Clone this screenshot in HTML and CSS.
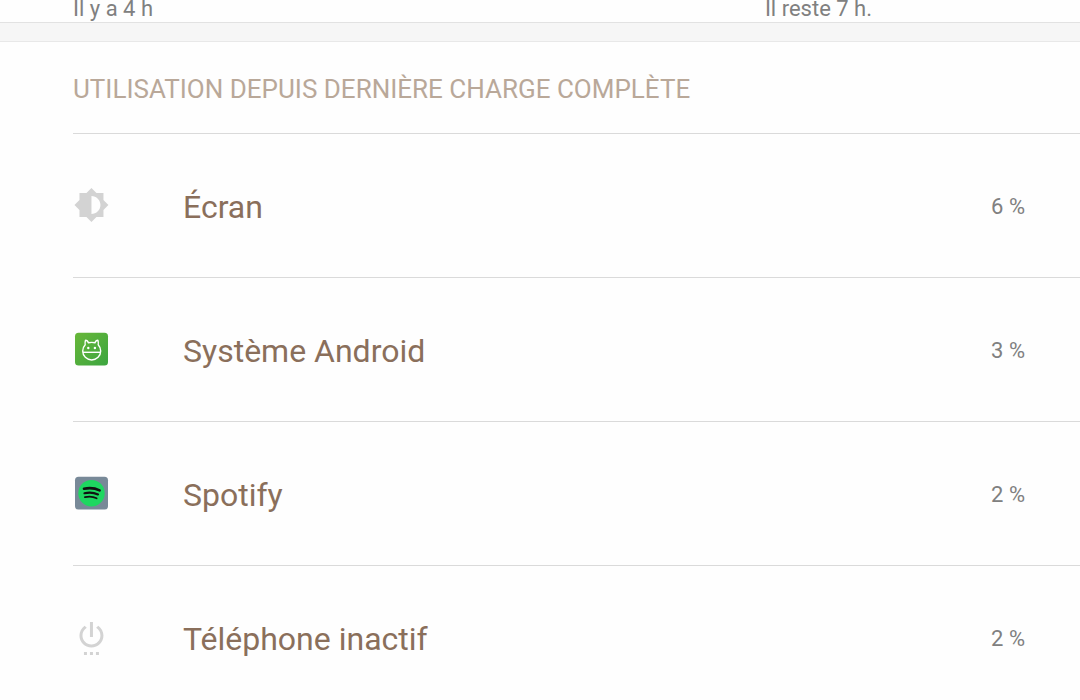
FILE: index.html
```html
<!DOCTYPE html>
<html lang="fr">
<head>
    <meta charset="UTF-8">
    <meta name="viewport" content="width=device-width, initial-scale=1.0">
    <title>Batterie</title>
    <link rel="stylesheet" href="styles.css">
</head>
<body>
    <div class="times">
        <span>Il y a 4 h</span>
        <span>Il reste 7 h.</span>
    </div>
    <div class="separator"></div>

    <section class="usage">
        <h2>UTILISATION DEPUIS DERNIÈRE CHARGE COMPLÈTE</h2>
        <ul>
            <li>
                <svg class="icon" viewBox="0 0 24 24" aria-hidden="true">
                    <path fill="#d3d3d3" transform="translate(.3 0)" d="M20 15.31L23.31 12 20 8.69V4h-4.69L12 .69 8.69 4H4v4.69L.69 12 4 15.31V20h4.69L12 23.31 15.31 20H20v-4.69zM12 18V6c3.31 0 6 2.69 6 6s-2.69 6-6 6z"/>
                </svg>
                <span class="name">Écran</span>
                <span class="percent">6 %</span>
            </li>
            <li>
                <svg class="icon" viewBox="0 0 36 36" aria-hidden="true">
                    <defs>
                        <linearGradient id="green" x1="0" y1="0" x2="1" y2="1">
                            <stop offset="0" stop-color="#68b739"/>
                            <stop offset="1" stop-color="#3ca540"/>
                        </linearGradient>
                    </defs>
                    <rect x="2" y="1.7" width="33" height="32.8" rx="3.5" fill="url(#green)"/>
                    <g fill="none" stroke="#fff" stroke-width="1.4" stroke-linejoin="round">
                        <path d="M12.5 9.2Q14.6 9.2 15.4 11.8Q18.7 11 22 11.8Q22.8 9.2 24.9 9.2Q25.6 11.4 25.2 13.8Q27.7 16.4 27.7 20A9 9 0 0 1 9.7 20Q9.7 16.4 12.2 13.8Q11.8 11.4 12.5 9.2Z"/>
                        <path d="M9.8 21.3H27.6"/>
                    </g>
                    <circle cx="15.3" cy="17" r="1.2" fill="#fff"/>
                    <circle cx="21.9" cy="17" r="1.2" fill="#fff"/>
                </svg>
                <span class="name">Système Android</span>
                <span class="percent">3 %</span>
            </li>
            <li>
                <svg class="icon" viewBox="0 0 36 36" aria-hidden="true">
                    <rect x="2" y="1.7" width="33" height="32.8" rx="3.5" fill="#788998"/>
                    <circle cx="18.5" cy="18.2" r="13.2" fill="#1ed760"/>
                    <g fill="none" stroke="#111" stroke-linecap="round">
                        <path stroke-width="2.6" d="M11 13.8Q19.5 11.9 26.6 15.4"/>
                        <path stroke-width="2.2" d="M11.5 18.2Q18.8 16.5 25 19.4"/>
                        <path stroke-width="1.8" d="M12 22.2Q18.5 20.8 23.6 23.3"/>
                    </g>
                </svg>
                <span class="name">Spotify</span>
                <span class="percent">2 %</span>
            </li>
            <li>
                <svg class="icon" viewBox="0 0 24 24" aria-hidden="true">
                    <path fill="#d3d3d3" transform="translate(.3 0)" d="M7 24h2v-2H7v2zm4 0h2v-2h-2v2zm2-22h-2v10h2V2zm3.56 2.44l-1.45 1.45C16.84 6.94 18 8.83 18 11c0 3.31-2.69 6-6 6s-6-2.69-6-6c0-2.17 1.16-4.06 2.88-5.12L7.44 4.44C5.36 5.88 4 8.28 4 11c0 4.42 3.58 8 8 8s8-3.58 8-8c0-2.72-1.36-5.12-3.44-6.56zM15 24h2v-2h-2v2z"/>
                </svg>
                <span class="name">Téléphone inactif</span>
                <span class="percent">2 %</span>
            </li>
        </ul>
    </section>
</body>
</html>
```
FILE: styles.css
```css
body {
    font-family: Roboto, "Liberation Sans", sans-serif;
    background-color: #fefefe;
    margin: 0;
}

.times {
    display: flex;
    justify-content: space-between;
    padding: 0 208px 4px 73px;
    font-size: 22px;
    line-height: 18px;
    color: #808080;
}

.separator {
    height: 18px;
    background-color: #f6f6f6;
    border-top: 1px solid #e2e2e2;
    border-bottom: 1px solid #e8e8e8;
}

.usage {
    padding-left: 73px;
}

h2 {
    margin: 0;
    padding: 31px 0 28px;
    font-size: 26px;
    font-weight: normal;
    line-height: 32px;
    color: #b9a899;
}

ul {
    list-style-type: none;
    margin: 0;
    padding: 0;
}

li {
    display: flex;
    align-items: flex-start;
    padding: 53px 55px 50px 0;
    border-top: 1px solid #dadada;
    line-height: 40px;
}

.icon {
    width: 36px;
    height: 36px;
    margin-right: 74px;
}

.name {
    flex: 1;
    font-size: 32px;
    color: #8a6f5b;
}

.percent {
    font-size: 22px;
    color: #808080;
}
```
